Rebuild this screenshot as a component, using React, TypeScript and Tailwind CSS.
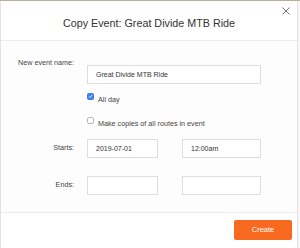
import { useState } from "react";

function Check({ checked, onChange, label }: { checked: boolean; onChange: (v: boolean) => void; label: string }) {
  return (
    <label className="flex items-start gap-[4px] cursor-pointer" onClick={() => onChange(!checked)}>
      {checked ? (
        <span className="w-[7px] h-[7px] rounded-[2px] bg-[#3c7fe8] flex items-center justify-center">
          <svg width="5" height="5" viewBox="0 0 5 5" fill="none" stroke="white" strokeWidth="1">
            <path d="M1 2.6 L2 3.6 L4 1.2" />
          </svg>
        </span>
      ) : (
        <span className="w-[7px] h-[7px] rounded-[2px] border border-[#b8b8b8] bg-white" />
      )}
      <span className="leading-[8px] mt-[3px]">{label}</span>
    </label>
  );
}

export default function App() {
  const [name, setName] = useState("Great Divide MTB Ride");
  const [allDay, setAllDay] = useState(true);
  const [copyRoutes, setCopyRoutes] = useState(false);
  const input = "h-[19px] border border-[#dedede] bg-white px-[8px] text-[7px] text-[#333] outline-none";

  return (
    <div className="w-[300px] h-[248px] bg-[#f7f7f7] overflow-hidden font-['Liberation_Sans',Arial,sans-serif]">
      <div className="h-[1px] bg-[#b9b192]" />
      <div className="w-[298px] h-[247px] bg-white border-l border-r border-[#e2e2e2] flex flex-col">
        {/* header */}
        <div className="relative h-[40px] border-b border-[#ececec] flex items-center justify-center">
          <h1 className="text-[10.75px] text-[#333] pt-[5px]">Copy Event: Great Divide MTB Ride</h1>
          <button className="absolute right-[5px] top-[4px] w-[12px] h-[12px] flex items-center justify-center text-[#777]">
            <svg width="8" height="8" viewBox="0 0 8 8" stroke="currentColor" strokeWidth="1">
              <path d="M0.5 0.5 L7.5 7.5 M7.5 0.5 L0.5 7.5" />
            </svg>
          </button>
        </div>

        {/* body */}
        <div className="flex-1 bg-[#fdfdfd] pt-[24px] text-[7.2px] text-[#444]">
          <div className="flex items-start h-[19px]">
            <label className="w-[73px] text-right leading-[8px] mt-[-6px]">New event name:</label>
            <input className={input + " ml-[13px] w-[174px]"} value={name} onChange={e => setName(e.target.value)} />
          </div>

          <div className="ml-[86px] mt-[9px]">
            <Check checked={allDay} onChange={setAllDay} label="All day" />
          </div>

          <div className="ml-[86px] mt-[13px]">
            <Check checked={copyRoutes} onChange={setCopyRoutes} label="Make copies of all routes in event" />
          </div>

          <div className="flex items-center mt-[11px]">
            <label className="w-[73px] text-right">Starts:</label>
            <input className={input + " ml-[13px] w-[71px]"} defaultValue="2019-07-01" />
            <input className={input + " ml-[24px] w-[79px]"} defaultValue="12:00am" />
          </div>

          <div className="flex items-center mt-[18px]">
            <label className="w-[73px] text-right">Ends:</label>
            <input className={input + " ml-[13px] w-[71px]"} />
            <input className={input + " ml-[24px] w-[79px]"} />
          </div>
        </div>

        {/* footer */}
        <div className="h-[36px] border-t border-[#ececec] bg-white flex items-start justify-end pt-[7px] pr-[5px]">
          <button className="w-[58px] h-[20px] rounded-[2px] bg-[#f86a1f] text-white text-[7.5px]">Create</button>
        </div>
      </div>
    </div>
  );
}
